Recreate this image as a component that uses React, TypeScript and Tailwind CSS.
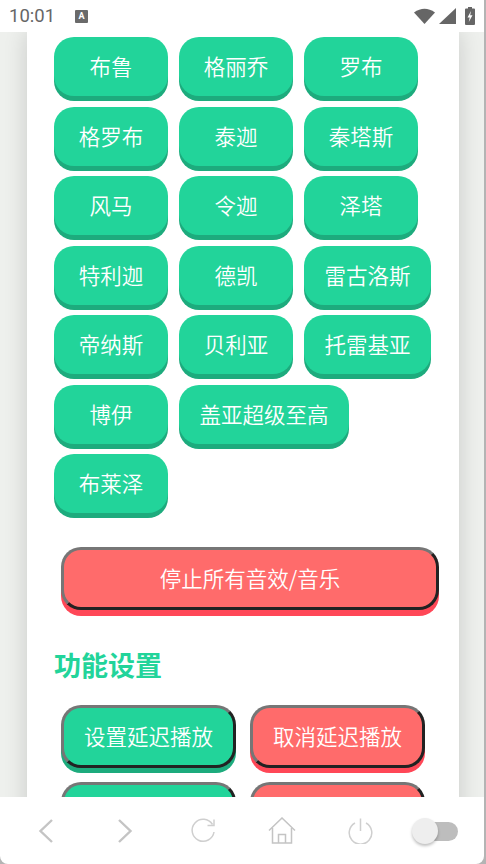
const heroes = [
  '布鲁', '格丽乔', '罗布',
  '格罗布', '泰迦', '秦塔斯',
  '风马', '令迦', '泽塔',
  '特利迦', '德凯', '雷古洛斯',
  '帝纳斯', '贝利亚', '托雷基亚',
  '博伊', '盖亚超级至高', '布莱泽',
];

const OutsetGreen = 'border-[3px] border-t-[#767676] border-l-[#767676] border-r-[#222] border-b-[#222] bg-[#22d49a] shadow-[0_5px_0_#1dab7d]';
const OutsetRed = 'border-[3px] border-t-[#767676] border-l-[#767676] border-r-[#222] border-b-[#222] bg-[#ff6b6b] shadow-[0_5px_0_#ff4757]';

const StatusBar = () => (
  <div className="flex h-8 shrink-0 items-center bg-white pl-[9px] pr-[9px]">
    <span className="font-['Roboto',sans-serif] text-[18.500px] leading-none text-[#666]">10:01</span>
    <div className="relative ml-5 flex h-[13px] w-[13px] items-center justify-center rounded-[1px] bg-[#6a6a6a] font-['Roboto',sans-serif] text-[9px] font-bold leading-none text-white">
      A
    </div>
    <div className="ml-auto flex items-center">
      <svg width="21" height="16" viewBox="0 0 21 16" fill="#666">
        <path d="M0 4.500 Q10.500 -3 21 4.500 L10.500 16 Z" />
      </svg>
      <svg className="ml-[4px]" width="17" height="16" viewBox="0 0 17 16" fill="#666">
        <path d="M17 0 V16 H0 Z" />
      </svg>
      <svg className="ml-[9px]" width="10" height="18" viewBox="0 0 10 18">
        <path d="M3 0 H7 V1.500 H9 Q10 1.500 10 2.500 V17 Q10 18 9 18 H1 Q0 18 0 17 V2.500 Q0 1.500 1 1.500 H3 Z" fill="#666" />
        <path d="M6 4 L2.500 10.500 H4.700 L3.800 15 L7.500 8.300 H5.200 Z" fill="#fff" />
      </svg>
    </div>
  </div>
);

const BottomNav = () => (
  <div className="flex h-[67px] shrink-0 items-center rounded-b-[8px] bg-white pl-[7px]">
    <div className="flex w-[78.600px] justify-center">
      <svg width="16" height="26" viewBox="0 0 16 26" fill="none" stroke="#c4c4c4" strokeWidth="2.400">
        <path d="M14 2 L2.500 13 L14 24" />
      </svg>
    </div>
    <div className="flex w-[78.600px] justify-center">
      <svg width="16" height="26" viewBox="0 0 16 26" fill="none" stroke="#c4c4c4" strokeWidth="2.400">
        <path d="M2 2 L13.500 13 L2 24" />
      </svg>
    </div>
    <div className="flex w-[78.600px] justify-center">
      <svg width="26" height="26" viewBox="0 0 26 26" fill="none" stroke="#cfcfcf" strokeWidth="1.500">
        <path d="M22.500 6.500 A11 11 0 1 0 24 14" />
        <path d="M24 1.500 V7.500 H17.500" />
      </svg>
    </div>
    <div className="flex w-[78.600px] justify-center">
      <svg width="28" height="27" viewBox="0 0 28 27" fill="none" stroke="#c4c4c4" strokeWidth="1.500">
        <path d="M1 13.500 L14 1 L27 13.500" />
        <path d="M4.500 11 V26 H23.500 V11" />
        <path d="M10.500 26 V17.500 H17.500 V26" />
      </svg>
    </div>
    <div className="flex w-[78.600px] justify-center">
      <svg width="25" height="26" viewBox="0 0 25 26" fill="none" stroke="#cfcfcf" strokeWidth="1.500">
        <path d="M7 5 A11.300 11.300 0 1 0 18 5" />
        <path d="M12.500 0.500 V13" />
      </svg>
    </div>
    <div className="relative ml-[12px] h-[26px] w-[46px]">
      <div className="absolute right-0 top-[4px] h-[19px] w-[32px] rounded-full bg-[#bdbdbd]" />
      <div className="absolute left-0 top-0 h-[26px] w-[26px] rounded-full bg-[#eeeeee] shadow-[0_2px_3px_rgba(0,0,0,0.25)]" />
    </div>
  </div>
);

export default function App() {
  return (
    <div className="flex h-[864px] w-[486px] overflow-hidden bg-[#b4b4b4] font-['Noto_Sans_CJK_SC',sans-serif]">
      <div className="flex h-[864px] w-[484px] flex-col">
        <StatusBar />
        <main className="min-h-0 flex-1 overflow-hidden bg-[#eef0ed] pl-[27px] pr-[25px]">
          <div className="h-[800px] bg-white pl-[27px] pr-[20px] pt-[5px] shadow-[0_0_22px_rgba(0,0,0,0.16)]">
            <div className="flex flex-wrap gap-x-[11px] gap-y-[10.500px]">
              {heroes.map((name) => (
                <button
                  key={name}
                  className="h-[59px] min-w-[114px] rounded-[20px] bg-[#22d49a] px-[20.500px] text-[21.500px] font-[350] text-white shadow-[0_5px_0_#1dab7d]"
                >
                  {name}
                </button>
              ))}
            </div>
            <button className={`ml-[7px] mt-[34px] h-[63px] w-[378px] rounded-[20px] text-[21.500px] font-[350] text-white ${OutsetRed} shadow-[0_6px_0_#ff4757]`}>
              停止所有音效/音乐
            </button>
            <h2 className="mt-[35px] h-[40px] text-[27px] font-bold leading-[40px] text-[#22d49a]">功能设置</h2>
            <div className="ml-[7px] mt-[20px] grid grid-cols-[175px_175px] gap-x-[14px] gap-y-[14px]">
              <button className={`h-[63px] rounded-[20px] text-[21.500px] font-[350] text-white ${OutsetGreen}`}>设置延迟播放</button>
              <button className={`h-[63px] rounded-[20px] text-[21.500px] font-[350] text-white ${OutsetRed}`}>取消延迟播放</button>
              <button className={`h-[63px] rounded-[20px] ${OutsetGreen}`} />
              <button className={`h-[63px] rounded-[20px] ${OutsetRed}`} />
            </div>
          </div>
        </main>
        <BottomNav />
      </div>
    </div>
  );
}
